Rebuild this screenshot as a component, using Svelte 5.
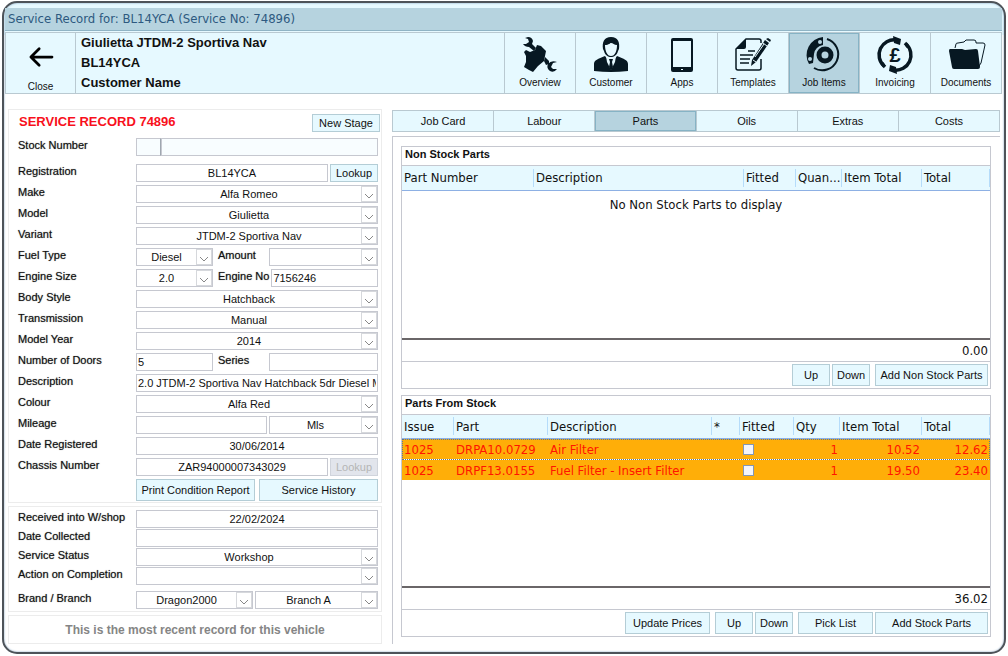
<script lang="ts">
	type Control = {
		kind: 'text' | 'select' | 'button' | 'label';
		id?: string;
		name?: string;
		value?: string;
		size: string;
		center?: boolean;
		disabled?: boolean;
	};
	type Row = { id: string; label: string; controls: Control[] };

	const tools = ['Overview', 'Customer', 'Apps', 'Templates', 'Job Items', 'Invoicing', 'Documents'];
	const tabs = ['Job Card', 'Labour', 'Parts', 'Oils', 'Extras', 'Costs'];

	let activeTool = $state('Job Items');
	let activeTab = $state('Parts');

	const select = (value: string, size = 'full'): Control => ({ kind: 'select', value, size });
	const text = (value: string, size = 'full', center = false): Control => ({
		kind: 'text',
		value,
		size,
		center
	});

	const vehicle: Row[] = [
		{
			id: 'registration',
			label: 'Registration',
			controls: [text('BL14YCA', 'full', true), { kind: 'button', name: 'Lookup', size: 'lookup' }]
		},
		{ id: 'make', label: 'Make', controls: [select('Alfa Romeo')] },
		{ id: 'model', label: 'Model', controls: [select('Giulietta')] },
		{ id: 'variant', label: 'Variant', controls: [select('JTDM-2 Sportiva Nav')] },
		{
			id: 'fuel',
			label: 'Fuel Type',
			controls: [
				select('Diesel', 'short'),
				{ kind: 'label', id: 'amount', name: 'Amount', size: 'sub' },
				{ ...select(''), id: 'amount' }
			]
		},
		{
			id: 'engine',
			label: 'Engine Size',
			controls: [
				select('2.0', 'short'),
				{ kind: 'label', id: 'engine-no', name: 'Engine No', size: 'sub' },
				{ ...text('7156246'), id: 'engine-no' }
			]
		},
		{ id: 'body', label: 'Body Style', controls: [select('Hatchback')] },
		{ id: 'transmission', label: 'Transmission', controls: [select('Manual')] },
		{ id: 'year', label: 'Model Year', controls: [select('2014')] },
		{
			id: 'doors',
			label: 'Number of Doors',
			controls: [
				text('5', 'short'),
				{ kind: 'label', id: 'series', name: 'Series', size: 'sub' },
				{ ...text(''), id: 'series' }
			]
		},
		{
			id: 'description',
			label: 'Description',
			controls: [text('2.0 JTDM-2 Sportiva Nav Hatchback 5dr Diesel Manual')]
		},
		{ id: 'colour', label: 'Colour', controls: [select('Alfa Red')] },
		{
			id: 'mileage',
			label: 'Mileage',
			controls: [text(''), { ...select('Mls', 'unit'), id: 'mileage-unit' }]
		},
		{ id: 'registered', label: 'Date Registered', controls: [text('30/06/2014', 'full', true)] },
		{
			id: 'chassis',
			label: 'Chassis Number',
			controls: [
				text('ZAR94000007343029', 'full', true),
				{ kind: 'button', name: 'Lookup', size: 'lookup', disabled: true }
			]
		}
	];

	const workshop: Row[] = [
		{ id: 'received', label: 'Received into W/shop', controls: [text('22/02/2024', 'full', true)] },
		{ id: 'collected', label: 'Date Collected', controls: [text('')] },
		{ id: 'status', label: 'Service Status', controls: [select('Workshop')] },
		{ id: 'action', label: 'Action on Completion', controls: [select('')] }
	];

	const brand: Row = {
		id: 'brand',
		label: 'Brand / Branch',
		controls: [select('Dragon2000'), { ...select('Branch A', 'branch'), id: 'branch' }]
	};

	const parts = [
		{ issue: '1025', part: 'DRPA10.0729', description: 'Air Filter', qty: 1, item: '10.52', total: '12.62' },
		{ issue: '1025', part: 'DRPF13.0155', description: 'Fuel Filter - Insert Filter', qty: 1, item: '19.50', total: '23.40' }
	];
</script>

{#snippet field(row: Row)}
	<div class="row">
		<label class="label" for={row.id}>{row.label}</label>
		<div class="controls">
			{#each row.controls as c}
				{#if c.kind === 'label'}
					<label class="label {c.size}" for={c.id}>{c.name}</label>
				{:else if c.kind === 'button'}
					<button class="btn {c.size}" disabled={c.disabled}>{c.name}</button>
				{:else if c.kind === 'select'}
					<div class="select {c.size}">
						<select id={c.id ?? row.id} aria-label={c.id ?? row.label}>
							<option>{c.value}</option>
						</select>
						<span class="arrow">
							<svg viewBox="0 0 10 6" width="10" height="6"><path d="M1 1l4 4 4-4" /></svg>
						</span>
					</div>
				{:else}
					<input
						class={c.size}
						class:center={c.center}
						id={c.id ?? row.id}
						value={c.value}
					/>
				{/if}
			{/each}
		</div>
	</div>
{/snippet}

{#snippet icon(name: string)}
	<svg class="icon" viewBox="0 0 36 36" width="36" height="36" aria-hidden="true">
		{#if name === 'Overview'}
			<path d="M3 1l3-1q4 0 5 4l-1 3 4 4-2 3-5-4q-4 0-6-3l3 0 3-2-1-3z" />
			<path d="M15 8l4 1 5 5-1 5-1 5-6 5-5 6-4-2-5-3 2-5V19l-2-4 2-2 4 2 5-2z" />
			<path d="M23 20l4 4v3l-3 1-2-4z" />
			<path d="M35 25l-4 1-2 4 2 2 4 0q-3 4-7 2-4-3-2-7 3-4 9-2z" />
		{:else if name === 'Customer'}
			<path d="M10 12C9 5 11 0 18 0s9 5 8 12l-1 2c-1 4-4 6-7 6s-6-2-7-6z" />
			<path class="paper" d="M12 8c4 0 5-2 6-2 2 0 3 2 6 2 0 6-2 11-6 11s-6-5-6-11z" />
			<path d="M1 34v-7c0-4 4-5 11-8l6 8 6-8c7 3 11 4 11 8v7q-17 2-34 0z" />
			<path class="paper" d="M13 19l5 3 5-3-1 6-4 8-4-8z" />
			<path d="M16 22h4l-1 3 1 5-2 4-2-4 1-5z" />
		{:else if name === 'Apps'}
			<path
				fill-rule="evenodd"
				d="M9 1h18a2 2 0 0 1 2 2v30a2 2 0 0 1-2 2H9a2 2 0 0 1-2-2V3a2 2 0 0 1 2-2zM9 4v26h18V4z"
			/>
			<path class="paper" d="M17 32h2v1h-2z" />
		{:else if name === 'Templates'}
			<path class="thin" d="M26 6V4q0-2-2-2H11L1 12v19q0 2 2 2h21q2 0 2-2v-9" />
			<path d="M1 12L11 2v8q0 2-2 2z" />
			<path class="thin" d="M13 14h7M5 18h13M5 22h10M5 26h9" />
			<path d="M30 3l4 3-13 19-5 4 1-6z" />
			<path class="cut" d="M20 20l9-13M28 6l4 3M18 23l3 2" />
			<path d="M31 2l2-1 3 2-1 2z" />
		{:else if name === 'Job Items'}
			<path class="ring" d="M21 2a16 16 0 1 1-13 29" />
			<path d="M17 0v8A10 10 0 0 0 8 17l-1 9-4 1A18 18 0 0 1 17 0z" />
			<circle class="hole" cx="14" cy="5" r="2" />
			<circle class="hole" cx="4" cy="22" r="2" />
			<circle class="disc" cx="19" cy="18" r="6" />
		{:else if name === 'Invoicing'}
			<path class="heavy" d="M7 29A15 15 0 0 1 19 3M29 7a15 15 0 0 1-12 26" />
			<path class="heavy" d="M28 6q2 2 3 4M8 30q-2-2-3-4" />
			<path d="M16-1l8 3-1 6-6-2zM20 37l-8-3 1-6 6 2z" />
			<text x="18" y="25" text-anchor="middle">£</text>
		{:else}
			<path class="hair" d="M7 11l1-4q0-1 2-1l6-1 2-2h8q2 0 2 2v1h7q2 0 2 2l-4 18-2 3" />
			<path d="M2 12h12l3 1 11-1q2 0 2 2l2 16q0 2-2 2H6q-2 0-2-2L1 14q0-2 1-2z" />
		{/if}
	</svg>
{/snippet}

<main class="window">
	<header class="titlebar">Service Record for: BL14YCA (Service No: 74896)</header>

	<nav class="toolbar">
		<button class="tool close">
			<svg viewBox="0 0 28 24" width="28" height="24" aria-hidden="true">
				<path d="M26 12H3M12 3l-9 9 9 9" />
			</svg>
			<span>Close</span>
		</button>
		<div class="heading">
			<span>Giulietta JTDM-2 Sportiva Nav</span>
			<span>BL14YCA</span>
			<span>Customer Name</span>
		</div>
		{#each tools as tool}
			<button class="tool" class:active={activeTool === tool} onclick={() => (activeTool = tool)}>
				{@render icon(tool)}
				<span>{tool}</span>
			</button>
		{/each}
	</nav>

	<div class="content">
		<aside class="record">
			<section class="box vehicle">
				<div class="record-head">
					<h1>SERVICE RECORD 74896</h1>
					<button class="btn">New Stage</button>
				</div>
				<div class="row stock">
					<label class="label" for="stock">Stock Number</label>
					<div class="controls joined">
						<input class="prefix" aria-label="Stock prefix" />
						<input class="full" id="stock" />
					</div>
				</div>
				<div class="rows">
					{#each vehicle as row (row.id)}
						{@render field(row)}
					{/each}
				</div>
				<div class="actions">
					<button class="btn">Print Condition Report</button>
					<button class="btn">Service History</button>
				</div>
			</section>

			<section class="box workshop">
				<div class="rows tight">
					{#each workshop as row (row.id)}
						{@render field(row)}
					{/each}
				</div>
				{@render field(brand)}
			</section>

			<p class="box notice">This is the most recent record for this vehicle</p>
		</aside>

		<div class="detail">
			<nav class="tabs">
				{#each tabs as tab}
					<button class="tab" class:active={activeTab === tab} onclick={() => (activeTab = tab)}>
						{tab}
					</button>
				{/each}
			</nav>

			<div class="sheet">
				<section class="panel">
					<h2>Non Stock Parts</h2>
					<div class="grid">
						<table>
							<colgroup>
								<col class="w132" /><col /><col class="w52" /><col class="w46" /><col class="w80" /><col class="w68" />
							</colgroup>
							<thead>
								<tr>
									<th>Part Number</th>
									<th>Description</th>
									<th>Fitted</th>
									<th>Quan...</th>
									<th>Item Total</th>
									<th>Total</th>
								</tr>
							</thead>
							<tbody>
								<tr class="empty"><td colspan="6">No Non Stock Parts to display</td></tr>
							</tbody>
						</table>
					</div>
					<div class="total">0.00</div>
					<footer>
						<button class="btn small">Up</button>
						<button class="btn small">Down</button>
						<button class="btn wide spaced">Add Non Stock Parts</button>
					</footer>
				</section>

				<section class="panel">
					<h2>Parts From Stock</h2>
					<div class="grid">
						<table>
							<colgroup>
								<col class="w52" /><col class="w94" /><col /><col class="w28" /><col class="w54" /><col class="w46" /><col class="w82" /><col class="w68" />
							</colgroup>
							<thead>
								<tr>
									<th>Issue</th>
									<th>Part</th>
									<th>Description</th>
									<th>*</th>
									<th>Fitted</th>
									<th>Qty</th>
									<th>Item Total</th>
									<th>Total</th>
								</tr>
							</thead>
							<tbody>
								{#each parts as p, i (p.part)}
									<tr class="part" class:current={i === 0}>
										<td>{p.issue}</td>
										<td>{p.part}</td>
										<td>{p.description}</td>
										<td></td>
										<td><input type="checkbox" aria-label="Fitted {p.part}" /></td>
										<td class="num">{p.qty}</td>
										<td class="num">{p.item}</td>
										<td class="num">{p.total}</td>
									</tr>
								{/each}
							</tbody>
						</table>
					</div>
					<div class="total">36.02</div>
					<footer>
						<button class="btn medium">Update Prices</button>
						<button class="btn small spaced">Up</button>
						<button class="btn small">Down</button>
						<button class="btn list spaced">Pick List</button>
						<button class="btn wide">Add Stock Parts</button>
					</footer>
				</section>
			</div>
		</div>
	</div>
</main>

<style>
	:global(*) {
		box-sizing: border-box;
	}

	:global(body) {
		background: #fff;
	}

	.window {
		--pale: #e6f9ff;
		--blue: #b6d3df;
		--line: #b9c9d1;
		--grey: #c6c8d0;
		display: flex;
		flex-direction: column;
		min-height: calc(100vh - 3px);
		margin: 1px 2px 2px;
		padding: 5px 2px 4px 1px;
		border: 2px solid #4d5359;
		border-radius: 15px;
		background: linear-gradient(var(--pale), var(--pale)) top / 100% 32px no-repeat, #fff;
		box-shadow: inset 0 0 2px #6f93b5;
		font-family: 'Liberation Sans', Arial, sans-serif;
		font-size: 11px;
		color: #111;
	}

	button,
	input,
	select {
		font: inherit;
		color: inherit;
		margin: 0;
	}

	button {
		cursor: pointer;
	}

	.titlebar {
		height: 23px;
		padding-left: 3px;
		background: var(--blue);
		border-bottom: 1px solid #8fb4c5;
		font-family: 'DejaVu Sans Condensed', 'DejaVu Sans', Tahoma, sans-serif;
		font-size: 13px;
		line-height: 22px;
		color: #2d5980;
	}

	.toolbar {
		display: flex;
		height: 62px;
		margin-top: 1px;
		border: 1px solid var(--line);
		background: var(--pale);
	}

	.tool {
		display: flex;
		flex-direction: column;
		align-items: center;
		gap: 4px;
		flex: 0 0 71px;
		padding: 4px 0 0;
		border: 0;
		border-left: 1px solid var(--line);
		background: transparent;
		font-size: 10px;
		line-height: 12px;
	}

	.tool.active,
	.tab.active {
		background: var(--blue);
		box-shadow: inset 0 0 0 1px #86b3c5;
	}

	.tool.close {
		flex-basis: 69px;
		gap: 13px;
		padding-top: 13px;
		border-left: 0;
	}

	.close path {
		fill: none;
		stroke: #000;
		stroke-width: 3;
		stroke-linecap: round;
		stroke-linejoin: round;
	}

	.heading {
		display: flex;
		flex: 1;
		flex-direction: column;
		padding-left: 5px;
		border-left: 1px solid var(--line);
		font-size: 13px;
		font-weight: bold;
		line-height: 20px;
		white-space: nowrap;
	}

	.icon {
		overflow: visible;
		fill: #071822;
	}

	.icon .thin,
	.icon .ring,
	.icon .hair,
	.icon .heavy,
	.icon .disc,
	.icon .cut {
		fill: none;
		stroke: #071822;
		stroke-width: 2;
	}

	.icon .thin {
		stroke-width: 1.5;
	}

	.icon .hair {
		stroke-width: 1;
	}

	.icon .heavy {
		stroke-width: 3.5;
	}

	.icon .disc {
		stroke-width: 5;
	}

	.icon .cut {
		stroke: #e6f9ff;
		stroke-width: 1;
	}

	.icon .paper {
		fill: #e6f9ff;
	}

	.icon .hole {
		fill: #b6d3df;
	}

	.icon text {
		font-size: 20px;
		font-weight: bold;
	}

	.content {
		display: grid;
		grid-template-columns: minmax(300px, 374px) minmax(0, 1fr);
		gap: 10px;
		flex: 1;
		padding: 15px 2px 4px 3px;
	}

	.record {
		display: flex;
		flex-direction: column;
		gap: 3px;
	}

	.box {
		margin: 0;
		border: 1px solid #ececec;
		padding: 3px 3px 1px 9px;
	}

	.record-head {
		display: flex;
		justify-content: space-between;
		margin: 1px -2px 6px 1px;
	}

	h1 {
		margin: 0;
		font-size: 13px;
		line-height: 16px;
		color: #f8101c;
	}

	.record-head .btn {
		height: 18px;
		width: 68px;
	}

	.rows {
		display: flex;
		flex-direction: column;
		gap: 3px;
	}

	.rows.tight {
		gap: 1px;
		margin-bottom: 6px;
	}

	.row {
		display: flex;
		height: 18px;
	}

	.row.stock {
		margin-bottom: 8px;
	}

	.label {
		flex: 0 0 118px;
		line-height: 14px;
		white-space: nowrap;
		text-shadow: 0 0 1px #777;
	}

	.label.sub {
		flex-basis: 49px;
	}

	.controls {
		display: flex;
		flex: 1;
		gap: 2px;
		min-width: 0;
	}

	.controls input,
	.controls select {
		width: 100%;
		height: 18px;
		min-width: 0;
		padding: 0 1px 1px;
		border: 1px solid var(--grey);
		border-radius: 0;
		background: #fff;
		outline: 0;
	}

	.controls input.center {
		text-align: center;
	}

	.controls.joined {
		gap: 0;
	}

	.joined input {
		background: #f8fdff;
	}

	.controls .prefix {
		flex: 0 0 25px;
		border-right-color: #9fa7b0;
	}

	.controls .full {
		flex: 1;
	}

	.controls .short {
		flex: 0 0 77px;
		margin-right: 3px;
	}

	.controls .unit {
		flex: 0 0 109px;
	}

	.controls .branch {
		flex: 0 0 123px;
	}

	.select {
		position: relative;
		min-width: 0;
	}

	.select select {
		display: block;
		appearance: none;
		padding-right: 17px;
		text-align: center;
		text-align-last: center;
	}

	.arrow {
		position: absolute;
		top: 1px;
		right: 1px;
		display: flex;
		align-items: end;
		justify-content: center;
		width: 16px;
		height: 16px;
		padding-bottom: 2px;
		border: 1px solid #d6d8dc;
		pointer-events: none;
	}

	.arrow path {
		fill: none;
		stroke: #888;
	}

	.btn {
		padding: 0;
		border: 1px solid #b4cdd6;
		background: var(--pale);
		white-space: nowrap;
	}

	.btn:disabled {
		border-color: #d0d4dc;
		background: #e2e5ec;
		color: #b5b5b5;
	}

	.btn.lookup {
		flex: 0 0 48px;
	}

	.actions {
		display: flex;
		gap: 4px;
		margin: 3px 0 0 118px;
	}

	.actions .btn {
		flex: 1;
		height: 22px;
	}

	.workshop {
		padding-bottom: 2px;
	}

	.notice {
		flex: 1;
		display: flex;
		align-items: center;
		justify-content: center;
		padding: 0;
		font-weight: bold;
		font-size: 12px;
		color: #858585;
	}

	.detail {
		display: flex;
		flex-direction: column;
		gap: 4px;
		min-width: 0;
	}

	.tabs {
		display: flex;
		height: 22px;
		margin-top: 1px;
		border: 1px solid var(--line);
	}

	.tab {
		flex: 1;
		padding: 0;
		border: 0;
		background: var(--pale);
	}

	.tab + .tab {
		border-left: 1px solid var(--line);
	}

	.sheet {
		display: flex;
		flex: 1;
		flex-direction: column;
		gap: 6px;
		padding: 9px 9px 7px 8px;
		border: 1px solid var(--grey);
		border-width: 1px 0 0 1px;
	}

	.panel {
		display: flex;
		flex: 1;
		flex-direction: column;
		border: 1px solid var(--grey);
	}

	h2 {
		height: 19px;
		margin: 0;
		padding-left: 3px;
		border-bottom: 1px solid var(--grey);
		font-size: 11px;
		line-height: 14px;
	}

	.grid {
		flex: 1;
	}

	table {
		width: 100%;
		table-layout: fixed;
		border-collapse: collapse;
		font-family: 'DejaVu Sans Condensed', 'DejaVu Sans', Tahoma, sans-serif;
		font-size: 13px;
	}

	.w28 {
		width: 28px;
	}

	.w46 {
		width: 46px;
	}

	.w52 {
		width: 52px;
	}

	.w54 {
		width: 54px;
	}

	.w68 {
		width: 68px;
	}

	.w80 {
		width: 80px;
	}

	.w82 {
		width: 82px;
	}

	.w94 {
		width: 94px;
	}

	.w132 {
		width: 132px;
	}

	th {
		height: 24px;
		padding: 0 0 0 2px;
		border-bottom: 1px solid #8db0e4;
		background: linear-gradient(#b5dcfa, #b5dcfa) right / 1px 18px no-repeat, var(--pale);
		font-weight: normal;
		text-align: left;
		white-space: nowrap;
	}

	td {
		height: 21px;
		padding: 0 2px;
		white-space: nowrap;
	}

	.empty td {
		height: 28px;
		text-align: center;
	}

	.part {
		color: #ff1400;
	}

	.part td {
		border-bottom: 1px solid #fff;
		background: #ffae08;
	}

	.part.current {
		outline: 1px dotted #5a7894;
		outline-offset: -1px;
	}

	.part .num {
		text-align: right;
	}

	td input {
		display: block;
		appearance: none;
		width: 11px;
		height: 11px;
		margin-left: 1px;
		border: 1px solid #8397b5;
		background: #f4f5fb;
	}

	.total {
		height: 24px;
		padding-right: 2px;
		border-top: 2px solid #6a6668;
		border-bottom: 1px solid var(--grey);
		font-family: 'DejaVu Sans Condensed', 'DejaVu Sans', Tahoma, sans-serif;
		font-size: 13px;
		line-height: 21px;
		text-align: right;
	}

	footer {
		display: flex;
		justify-content: flex-end;
		gap: 2px;
		padding: 2px;
	}

	footer .btn {
		height: 22px;
	}

	.small {
		width: 38px;
	}

	.medium {
		width: 85px;
	}

	.list {
		width: 75px;
	}

	.wide {
		width: 113px;
	}

	.spaced {
		margin-left: 3px;
	}
</style>
